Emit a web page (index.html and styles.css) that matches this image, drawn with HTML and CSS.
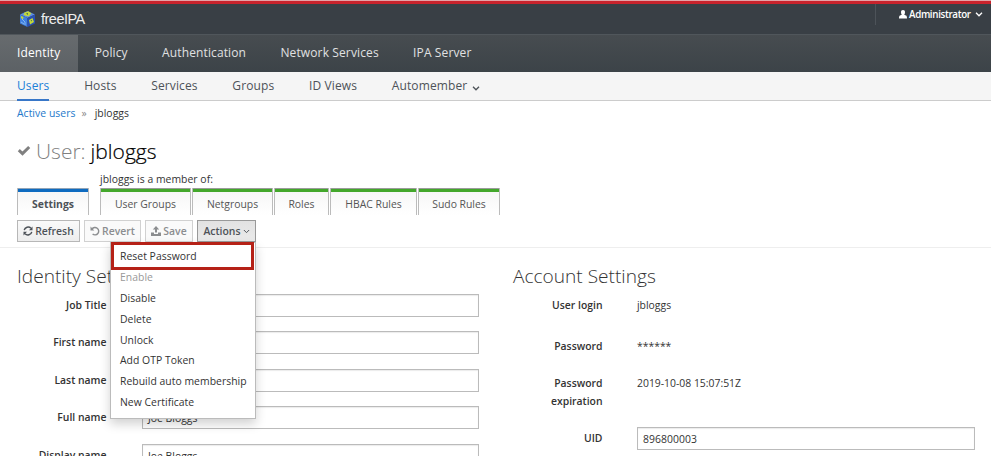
FILE: index.html
```html
<!DOCTYPE html>
<html lang="en">
<head>
<meta charset="utf-8">
<title>freeIPA - User: jbloggs</title>
<link rel="stylesheet" href="styles.css">
</head>
<body>
<header class="masthead">
  <div class="brand">
    <svg class="cube" viewBox="0 0 15 16"><path fill="#5b8be0" d="M7.5 0 15 3.5 7.5 7 0 3.5z"/><path fill="#3f7fe0" d="M0 3.5 7.5 7v9L0 12.500z"/><path fill="#294fb2" d="M15 3.500 7.500 7v9L15 12.500z"/><path fill="#c3d83a" d="m4.500 1.500 4-1.300 3 2.300-3 3-5-1.500zM9 9l3.500-2 1.500 4-4 2.500zM1 5l2.500 1-.5 2.500L1 7z"/><path fill="#49705b" d="m6 2.500 2-.5v2zM10.500 9.500l1.500-.5v1.500z"/><path stroke="#84b8ed" stroke-width="1" fill="none" d="m2 8 3 3v3M1 11l3 2"/></svg>
    <span class="brand-name">freeIPA</span>
  </div>
  <div class="account">
    <svg class="person" viewBox="0 0 8 9"><path fill="#fff" d="M4 0c1.300 0 2 .9 2 2.300 0 1.200-.3 2-.8 2.500L7 5.600c.7.400 1 1 1 2.900H0c0-1.900.3-2.500 1-2.900l1.800-.8C2.300 4.300 2 3.500 2 2.300 2 .9 2.700 0 4 0z"/></svg>
    <span>Administrator</span>
    <svg class="chev" viewBox="0 0 8 5"><path d="m1 .8 3 3 3-3"/></svg>
  </div>
</header>
<nav class="primary">
  <a class="on">Identity</a><a>Policy</a><a>Authentication</a><a>Network Services</a><a>IPA Server</a>
</nav>
<nav class="secondary">
  <a class="on">Users</a><a>Hosts</a><a>Services</a><a>Groups</a><a>ID Views</a><a>Automember<svg class="chev nav-chev" viewBox="0 0 8 5"><path d="m1 .8 3 3 3-3"/></svg></a>
</nav>
<div class="crumbs"><a>Active users</a><i>»</i><span>jbloggs</span></div>
<h1><svg class="check" viewBox="0 0 13 11"><path d="M1.300 5.200 5 8.600 11.700 2" fill="none" stroke="#808080" stroke-width="3"/></svg><span class="muted">User:</span><span class="login">jbloggs</span></h1>
<p class="member">jbloggs is a member of:</p>
<div class="tabs">
  <a class="tab settings">Settings</a>
  <a class="tab groups">User Groups</a>
  <a class="tab net">Netgroups</a>
  <a class="tab roles">Roles</a>
  <a class="tab hbac">HBAC Rules</a>
  <a class="tab sudo">Sudo Rules</a>
</div>
<div class="toolbar">
  <a class="btn refresh"><svg viewBox="0 0 10 10"><path d="M1.200 4.200A4 4 0 0 1 8 2.300M8.800 5.800A4 4 0 0 1 2 7.700" fill="none" stroke="currentColor" stroke-width="1.400"/><path fill="currentColor" d="M9.500.6v3.600H6zM.5 9.400V5.800H4z"/></svg>Refresh</a>
  <a class="btn revert off"><svg viewBox="0 0 10 10"><path d="M2 3A3.700 3.700 0 1 1 2.600 8" fill="none" stroke="currentColor" stroke-width="1.400"/><path fill="currentColor" d="M.5.600v3.800h3.800z"/></svg>Revert</a>
  <a class="btn save off"><svg viewBox="0 0 10 10"><path fill="currentColor" d="m5 0 3.200 3.500H6v3H4v-3H1.800zM0 6.500h3V8h4V6.500h3V10H0z"/></svg>Save</a>
  <div class="dropdown">
    <a class="btn actions">Actions<svg class="chev" viewBox="0 0 8 5"><path d="m1 .8 3 3 3-3"/></svg></a>
    <ul class="menu">
      <li class="marked">Reset Password</li><li class="disabled">Enable</li><li>Disable</li><li>Delete</li><li>Unlock</li><li>Add OTP Token</li><li>Rebuild auto membership</li><li>New Certificate</li>
    </ul>
  </div>
</div>
<main>
  <section class="identity">
    <h2>Identity Settings</h2>
    <div class="row"><label>Job Title</label><div class="input"></div></div>
    <div class="row"><label>First name</label><div class="input"></div></div>
    <div class="row"><label>Last name</label><div class="input"></div></div>
    <div class="row"><label>Full name</label><div class="input">Joe Bloggs</div></div>
    <div class="row"><label>Display name</label><div class="input">Joe Bloggs</div></div>
  </section>
  <section class="acct">
    <h2>Account Settings</h2>
    <div class="row first"><label>User login</label><span>jbloggs</span></div>
    <div class="row"><label>Password</label><span class="stars">******</span></div>
    <div class="row tall"><label>Password expiration</label><span>2019-10-08 15:07:51Z</span></div>
    <div class="row"><label>UID</label><div class="input">896800003</div></div>
  </section>
</main>
</body>
</html>
```

FILE: styles.css
```css
* { box-sizing: border-box; }
html, body { height: 456px; overflow: hidden; }
body { margin: 0; background: #fff; color: #333; font: 10.4px/18px "Open Sans", sans-serif; }
svg { display: block; flex: none; }
.masthead { height: 34px; border-top: 1px solid #e2a3a7; background: linear-gradient(#c8232c 3px, #393f45 3px); display: flex; justify-content: space-between; }
.brand { display: flex; align-items: center; padding: 2px 0 0 20px; gap: 6px; color: #eee; }
.cube { width: 15px; height: 16px; }
.brand-name { font: 14.5px/20px "Liberation Sans", sans-serif; letter-spacing: -.5px; }
.account { display: flex; align-items: center; width: 116px; height: 21px; margin-top: 3px; border-left: 1px solid #4d5359; padding-left: 23px; color: #fff; font-weight: 600; font-size: 9.8px; letter-spacing: -.35px; }
.person { width: 8px; height: 9px; margin-right: 2px; }
.chev { width: 8px; height: 5px; fill: none; stroke: currentColor; stroke-width: 1.300; }
.account .chev { margin-left: 4px; }
.primary { height: 38px; display: flex; border-top: 1px solid #50565b; background: linear-gradient(#474c50, #3c4348); color: #e0e1e2; font-size: 12px; line-height: 35px; letter-spacing: .12px; }
.primary a { padding: 0 17.200px 0 17.200px; }
.primary .on { padding-left: 17px; background: linear-gradient(#676b6e, #5c6165); color: #fff; }
.secondary { height: 29px; display: flex; gap: 34.700px; padding-left: 17px; background: #f5f5f5; border-bottom: 1px solid #ccc; font-size: 12px; line-height: 28px; letter-spacing: .12px; color: #4d5258; }
.secondary a { display: flex; align-items: center; height: 28px; }
.secondary .on { height: 29px; color: #1b80d8; border-bottom: 2px solid #3877c8; line-height: 27px; }
.nav-chev { margin: 4px 0 0 5px; }
.crumbs { display: flex; height: 25px; line-height: 25px; padding-left: 17px; letter-spacing: .04px; }
.crumbs a { color: #2479cb; }
.crumbs i { font-style: normal; color: #888; margin: 0 8px 0 6px; }
h1 { display: flex; align-items: center; margin: 0; height: 47px; padding: 3px 0 0 17px; font: 300 21px/30px "Open Sans", sans-serif; }
.check { width: 14px; height: 11px; margin: 0 5px 1px 0; }
.muted { color: #808080; }
.login { color: #000; margin-left: 5px; -webkit-text-stroke: .2px #000; }
.member { margin: 0; height: 15px; padding-left: 100px; line-height: 12px; letter-spacing: .03px; }
.tabs { display: flex; gap: 1px; height: 27px; padding-left: 17px; }
.tab { border: 1px solid #bbb; border-top: 0; border-bottom: 0; background: linear-gradient(#f5f5f5, #fff); box-shadow: inset 0 1px #9b9b9b, inset 0 4px #43a72b; text-align: center; padding-top: 7px; height: 27px; color: #555; }
.settings { width: 72px; margin-right: 10px; font-weight: 700; box-shadow: inset 0 1px #91a4b7, inset 0 4px #0e6bc0; color: #4d5258; }
.groups { width: 91px; } .net { width: 81px; } .roles { width: 55px; } .hbac { width: 87px; } .sudo { width: 82px; }
.toolbar { height: 33px; padding: 5px 0 0 17px; display: flex; border-bottom: 1px solid #eee; }
.btn { display: flex; align-items: center; justify-content: center; height: 22px; border: 1px solid #b7b7b7; background: linear-gradient(#fafafa, #ededed); color: #4d5258; font-weight: 600; gap: 2px; }
.btn > svg:not(.chev) { width: 10px; height: 10px; }
.refresh { width: 63px; margin-right: 4px; }
.revert { width: 57px; margin-right: 4px; } .save { width: 48px; margin-right: 4px; }
.off { color: #8b8d8f; border-color: #d1d1d1; background: #fafafa; }
.dropdown { position: relative; }
.actions { width: 59px; background: linear-gradient(#e2e2e2, #eaeaea); border-color: #999; }
.actions .chev { width: 7px; stroke-width: 1.100; }
.menu { position: absolute; z-index: 2; top: 22px; right: 0; width: 146px; height: 177px; margin: 0; padding: 0; list-style: none; background: #fff; border: 1px solid #bbb; box-shadow: 0 5px 10px rgba(0,0,0,.18); letter-spacing: .03px; }
.menu li { height: 20.850px; line-height: 19px; padding-left: 9px; white-space: nowrap; }
.menu .marked { height: 28px; width: 143px; border: 3px solid #b52117; padding: 1px 0 0 6px; line-height: 21px; margin: -1px 0 -2px; }
.menu .disabled { color: #999; }
main { display: flex; padding-left: 17px; }
h2 { margin: 0; height: 46px; padding-top: 15px; font: 300 19.100px/26px "Open Sans", sans-serif; white-space: nowrap; }
.identity { width: 496px; }
.row { display: flex; height: 37.400px; }
label { width: 89.500px; margin-right: 35.500px; text-align: right; line-height: 18px; padding-top: 2px; font-weight: 600; }
.input { width: 337px; height: 23px; border: 1px solid #bbb; padding-left: 5px; line-height: 22px; box-shadow: inset 0 1px 1px rgba(0,0,0,.08); }
.acct { width: 462px; }
.acct label { margin-right: 34.500px; }
.acct span { padding-top: 2px; }
.acct .first { height: 41px; } .acct .tall { height: 55px; }
.acct .input { width: 338px; letter-spacing: .05px; }
```
